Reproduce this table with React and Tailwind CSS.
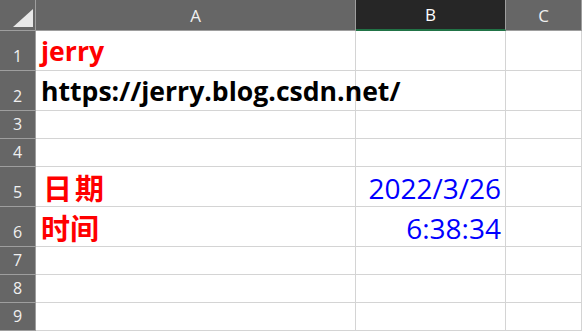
const COLS = ['A', 'B', 'C']
const ROW_HEIGHTS = [40, 40, 28, 28, 40, 40, 28, 28, 28]

const latin = "font-['Open_Sans','Noto_Sans_CJK_SC',sans-serif]"
const cjk = "font-['Noto_Sans_CJK_SC',sans-serif]"

// cell contents keyed by row number
const CELLS = {
  1: { A: <span className={`${latin} text-[26.6px] font-bold text-[#ff0000] pb-[5px]`}>jerry</span> },
  2: {
    A: (
      <span className={`${latin} text-[26.6px] font-bold text-black whitespace-nowrap pb-[5px]`}>
        https://jerry.blog.csdn.net/
      </span>
    ),
  },
  5: {
    A: <span className={`${cjk} text-[29px] font-bold text-[#ff0000] tracking-[3px] pl-[2px] pb-[4px]`}>日期</span>,
    B: <span className={`${latin} text-[28px] text-[#0000ff] pb-[4px]`}>2022/3/26</span>,
  },
  6: {
    A: <span className={`${cjk} text-[29px] font-bold text-[#ff0000] pb-[4px]`}>时间</span>,
    B: <span className={`${latin} text-[28px] text-[#0000ff] pb-[4px]`}>6:38:34</span>,
  },
}

const Corner = () => (
  <div className="relative h-[31px] bg-[#666666] border-r border-b border-[#9e9e9e]">
    <svg className="absolute left-[13px] top-[9px]" width="20" height="18" viewBox="0 0 20 18">
      <polygon points="20,0 20,18 0,18" fill="#e8e8e8" />
    </svg>
  </div>
)

export default function App() {
  return (
    <div className={`w-[582px] h-[331px] overflow-hidden bg-white ${latin}`}>
      <div className="grid grid-cols-[36px_320px_150px_76px]">
        <Corner />
        {COLS.map((c) => (
          <div
            key={c}
            className={`h-[31px] flex items-center justify-center text-[17px] leading-none border-b border-r border-[#9e9e9e] ${
              c === 'B' ? 'bg-[#262626] text-white border-b-2 border-b-[#217346]' : 'bg-[#666666] text-[#f0f0f0]'
            }`}
          >
            {c}
          </div>
        ))}

        {ROW_HEIGHTS.map((h, i) => {
          const row = i + 1
          const cells = CELLS[row] || {}
          return (
            <div key={row} className="contents">
              <div
                className="flex items-end justify-center pb-[6px] bg-[#666666] text-[#f0f0f0] text-[16px] leading-none border-b border-r border-[#9e9e9e]"
                style={{ height: h }}
              >
                {row}
              </div>
              {COLS.map((c) => (
                <div
                  key={c}
                  className={`flex items-end border-b border-r border-[#d4d4d4] leading-none ${
                    c === 'B' ? 'justify-end pr-[4px]' : 'justify-start pl-[5px]'
                  }`}
                  style={{ height: h }}
                >
                  {cells[c]}
                </div>
              ))}
            </div>
          )
        })}
      </div>
    </div>
  )
}
